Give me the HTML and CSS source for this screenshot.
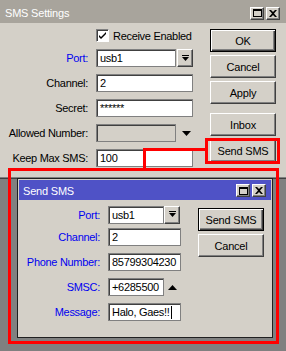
FILE: index.html
```html
<!DOCTYPE html>
<html lang="en">
<head>
    <meta charset="UTF-8">
    <title>SMS Settings</title>
    <link rel="stylesheet" href="styles.css">
</head>
<body>
    <div class="desk">
        <div class="win main-win">
            <div class="titlebar inactive">
                <span class="title">SMS Settings</span>
                <div class="tb-btns">
                    <span class="tb-btn"><svg width="9" height="8" viewBox="0 0 9 8"><rect x="0.5" y="0.5" width="8" height="7" fill="none" stroke="#000"/><rect x="0" y="0" width="9" height="2" fill="#000"/></svg></span>
                    <span class="tb-btn"><svg width="8" height="7" viewBox="0 0 8 7"><path d="M0 0h2l2 2 2-2h2l-3 3.5 3 3.5h-2l-2-2-2 2h-2l3-3.5z" fill="#000"/></svg></span>
                </div>
            </div>
            <div class="win-body">
                <div class="form">
                    <div class="row">
                        <span class="label"></span>
                        <span class="check"><svg width="9" height="9" viewBox="0 0 9 9"><path d="M1 4l2 2 5-5v2l-5 5-2-2z" fill="#000"/></svg></span>
                        <span class="check-text">Receive Enabled</span>
                    </div>
                    <div class="row">
                        <span class="label blue">Port:</span>
                        <span class="field select">usb1</span>
                        <span class="drop-btn"><svg width="7" height="7" viewBox="0 0 7 7"><rect x="0" y="0" width="7" height="1" fill="#000"/><path d="M0 2h7l-3.5 4z" fill="#000"/></svg></span>
                    </div>
                    <div class="row">
                        <span class="label">Channel:</span>
                        <span class="field wide">2</span>
                    </div>
                    <div class="row">
                        <span class="label">Secret:</span>
                        <span class="field wide">******</span>
                    </div>
                    <div class="row">
                        <span class="label">Allowed Number:</span>
                        <span class="field select disabled"></span>
                        <span class="arrow"><svg width="9" height="5" viewBox="0 0 9 5"><path d="M0 0h9l-4.5 5z" fill="#000"/></svg></span>
                    </div>
                    <div class="row">
                        <span class="label">Keep Max SMS:</span>
                        <span class="field wide">100</span>
                    </div>
                </div>
                <div class="btns">
                    <span class="btn default">OK</span>
                    <span class="btn">Cancel</span>
                    <span class="btn">Apply</span>
                    <span class="btn spaced">Inbox</span>
                    <span class="btn">Send SMS</span>
                </div>
            </div>
        </div>

        <div class="win send-win">
            <div class="titlebar active">
                <span class="title">Send SMS</span>
                <div class="tb-btns">
                    <span class="tb-btn"><svg width="9" height="8" viewBox="0 0 9 8"><rect x="0.5" y="0.5" width="8" height="7" fill="none" stroke="#000"/><rect x="0" y="0" width="9" height="2" fill="#000"/></svg></span>
                    <span class="tb-btn"><svg width="8" height="7" viewBox="0 0 8 7"><path d="M0 0h2l2 2 2-2h2l-3 3.5 3 3.5h-2l-2-2-2 2h-2l3-3.5z" fill="#000"/></svg></span>
                </div>
            </div>
            <div class="win-body send-body">
                <div class="form">
                    <div class="row">
                        <span class="label blue">Port:</span>
                        <span class="field select">usb1</span>
                        <span class="drop-btn"><svg width="7" height="7" viewBox="0 0 7 7"><rect x="0" y="0" width="7" height="1" fill="#000"/><path d="M0 2h7l-3.5 4z" fill="#000"/></svg></span>
                    </div>
                    <div class="row">
                        <span class="label blue">Channel:</span>
                        <span class="field wide">2</span>
                    </div>
                    <div class="row">
                        <span class="label blue">Phone Number:</span>
                        <span class="field wide">85799304230</span>
                    </div>
                    <div class="row">
                        <span class="label blue">SMSC:</span>
                        <span class="field select">+6285500</span>
                        <span class="arrow"><svg width="9" height="5" viewBox="0 0 9 5"><path d="M0 5h9l-4.5-5z" fill="#000"/></svg></span>
                    </div>
                    <div class="row">
                        <span class="label blue">Message:</span>
                        <span class="field wide">Halo, Gaes!!<span class="caret"></span></span>
                    </div>
                </div>
                <div class="btns">
                    <span class="btn default">Send SMS</span>
                    <span class="btn">Cancel</span>
                </div>
            </div>
        </div>

        <div class="mark mark-btn"></div>
        <div class="mark mark-h"></div>
        <div class="mark mark-v"></div>
        <div class="mark mark-box"></div>
    </div>
</body>
</html>
```

FILE: styles.css
```css
html, body {
    margin: 0;
    padding: 0;
    width: 286px;
    height: 351px;
    overflow: hidden;
    background: #808080;
    font-family: 'Liberation Sans', Arial, sans-serif;
    font-size: 11px;
    color: #000;
}
.desk {
    position: relative;
    width: 286px;
    height: 351px;
}
.win {
    background: #d4d0c8;
    box-sizing: border-box;
}
.main-win {
    width: 286px;
    height: 179px;
    border-bottom: 1px solid #404040;
    box-shadow: inset 0 -1px #808080;
}
.titlebar {
    display: flex;
    align-items: center;
    justify-content: space-between;
    height: 23px;
    padding: 3px 6px 0 5px;
    box-sizing: border-box;
    color: #fff;
}
.titlebar.inactive {
    background: #a8a49c;
}
.titlebar.active {
    background: #4f52c6;
    height: 20px;
    padding: 1px 5px 0 4px;
}
.title {
    letter-spacing: -0.2px;
}
.tb-btns {
    display: flex;
    gap: 2px;
}
.tb-btn {
    width: 14px;
    height: 13px;
    box-sizing: border-box;
    background: #d4d0c8;
    border: 1px solid;
    border-color: #fff #404040 #404040 #fff;
    box-shadow: inset -1px -1px #808080;
    display: flex;
    align-items: center;
    justify-content: center;
}
.win-body {
    display: flex;
    padding-top: 6px;
}
.form {
    width: 210px;
    display: flex;
    flex-direction: column;
    gap: 7px;
}
.row {
    display: flex;
    align-items: center;
    height: 18px;
}
.row:first-child {
    height: 13px;
}
.label {
    width: 88px;
    margin-right: 8px;
    text-align: right;
    white-space: nowrap;
    letter-spacing: -0.3px;
    flex-shrink: 0;
}
.blue {
    color: #0000f0;
}
.check {
    width: 13px;
    height: 13px;
    box-sizing: border-box;
    background: #fff;
    border: 1px solid;
    border-color: #808080 #fff #fff #808080;
    box-shadow: inset 1px 1px #404040;
    display: flex;
    align-items: center;
    justify-content: center;
}
.check-text {
    margin-left: 4px;
    letter-spacing: -0.3px;
}
.field {
    height: 18px;
    box-sizing: border-box;
    background: #fff;
    border: 1px solid #808080;
    box-shadow: inset 1px 1px #404040;
    padding: 2px 0 0 3px;
    line-height: 13px;
    white-space: nowrap;
    overflow: hidden;
    letter-spacing: -0.3px;
}
.field.wide {
    width: 97px;
}
.field.select {
    width: 80px;
}
.field.disabled {
    background: #d4d0c8;
}
.drop-btn {
    width: 16px;
    height: 18px;
    margin-left: 1px;
    box-sizing: border-box;
    border: 1px solid;
    border-color: #fff #404040 #404040 #fff;
    box-shadow: inset -1px -1px #808080;
    display: flex;
    align-items: center;
    justify-content: center;
}
.arrow {
    margin-left: 6px;
    display: flex;
}
.caret {
    display: inline-block;
    width: 1px;
    height: 13px;
    background: #000;
    margin-left: 1px;
    vertical-align: top;
}
.btns {
    display: flex;
    flex-direction: column;
    gap: 3px;
}
.btn {
    width: 66px;
    height: 23px;
    box-sizing: border-box;
    border: 1px solid;
    border-color: #fff #404040 #404040 #fff;
    box-shadow: inset -1px -1px #808080;
    display: flex;
    align-items: center;
    justify-content: center;
    letter-spacing: -0.2px;
}
.btn.default {
    border-color: #000;
    box-shadow: inset 1px 1px #fff, inset -1px -1px #404040, inset -2px -2px #808080;
}
.btn.spaced {
    margin-top: 6px;
}

/* send sms window sits on the desktop */
.send-win {
    position: absolute;
    left: 17px;
    top: 178px;
    width: 256px;
    height: 160px;
    border: 1px solid #202020;
    padding: 1px;
}
.send-body {
    padding-top: 8px;
}
.send-body .form {
    width: 162px;
}
.send-body .label {
    width: 81px;
}
.send-body .field.wide {
    width: 73px;
}
.send-body .field.select {
    width: 56px;
}
.send-body .drop-btn {
    margin-left: 0;
}
.send-body .arrow {
    margin-left: 4px;
}
.send-body .btns {
    margin-left: 17px;
}

/* red annotations */
.mark {
    position: absolute;
    box-sizing: border-box;
}
.mark-btn {
    left: 205px;
    top: 138px;
    width: 75px;
    height: 26px;
    border: 3px solid #f00;
}
.mark-h {
    left: 143px;
    top: 148px;
    width: 63px;
    height: 3px;
    background: #f00;
}
.mark-v {
    left: 143px;
    top: 148px;
    width: 3px;
    height: 22px;
    background: #f00;
}
.mark-box {
    left: 8px;
    top: 168px;
    width: 271px;
    height: 176px;
    border: 3px solid #f00;
}
```
